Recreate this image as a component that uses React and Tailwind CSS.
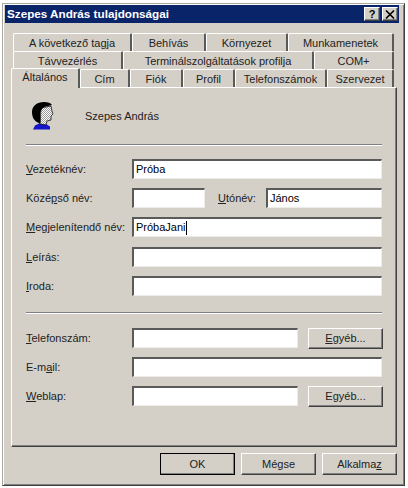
const Field = ({ w = 'w-[250px]', children }) => (
  <div className={`h-5 shrink-0 bg-white flex items-center pl-[2px] text-black border-t-2 border-l-2 border-t-[#5a5a58] border-l-[#5a5a58] border-b border-r border-b-[#eeece8] border-r-[#eeece8] ${w}`}>
    {children}
  </div>
);

const Btn = ({ children, className = '' }) => (
  <div className={`flex items-center justify-center bg-[#d4d0c8] border border-t-white border-l-white border-r-[#404040] border-b-[#404040] shadow-[inset_-1px_-1px_0_#808080] ${className}`}>
    {children}
  </div>
);

const Tab = ({ w, children }) => (
  <div className={`h-[18px] pt-px flex items-center justify-center rounded-t-[2px] border-t border-l border-t-white border-l-white border-r-2 border-r-[#5a5a58] bg-[#d4d0c8] ${w}`}>
    {children}
  </div>
);

const Row = ({ label, children }) => (
  <div className="flex items-center h-5">
    <div className="w-[106px] shrink-0 whitespace-nowrap">{label}</div>
    {children}
  </div>
);

const Separator = ({ className }) => (
  <div className={`w-[356px] h-[2px] border-t border-t-[#808080] border-b border-b-white ${className}`} />
);

const UserIcon = () => (
  <svg width="22" height="28" viewBox="0 0 22 28" className="ml-[6px] shrink-0">
    <defs>
      <pattern id="dither" width="2" height="2" patternUnits="userSpaceOnUse">
        <rect width="2" height="2" fill="#fff" />
        <rect width="1" height="1" fill="#9a9a9a" />
        <rect x="1" y="1" width="1" height="1" fill="#9a9a9a" />
      </pattern>
    </defs>
    <path d="M1 27.5 L3 23.5 L8 21 L14 22 L18 24.5 L18 27.5 Z" fill="#1414c8" />
    <path d="M9 6 L19 4 L20 9 L21 12 L19 14 L19 18 L15 19 L14 23 L8 22 Z" fill="url(#dither)" stroke="#000" strokeWidth="0.7" />
    <path d="M7 21 C2 19 0 15 0 10 C0 4 5 0 12 0 C16 0 19 1 20 3 L12 5 C9 7 8 10 8 13 C8 17 9 19 8 21 Z" fill="#000" />
  </svg>
);

export default function App() {
  return (
    <div className="w-[408px] h-[488px] bg-white overflow-hidden pt-[3px] pl-[2px] text-[11px] leading-none text-[#222] font-['Liberation_Sans',sans-serif]">
      <div className="w-[403px] h-[483px] bg-[#d4d0c8] border border-t-[#a8a6a0] border-l-[#a8a6a0] border-r-[#404040] border-b-[#404040] shadow-[inset_1px_1px_0_#fff,inset_-1px_-1px_0_#808080] pt-[1px] pl-[2px]">
        <div className="w-[394px] h-[18px] bg-[#0a246a] flex items-center justify-between pl-0.5 pr-px text-white font-bold text-[11.7px]">
          <span>Szepes András tulajdonságai</span>
          <div className="flex gap-0.5">
            <Btn className="w-4 h-[14px] text-black font-bold text-[11px]">?</Btn>
            <Btn className="w-4 h-[14px]">
              <svg width="10" height="9" viewBox="0 0 10 9">
                <path d="M1 0.5 L9 8.5 M9 0.5 L1 8.5" stroke="#000" strokeWidth="1.6" />
              </svg>
            </Btn>
          </div>
        </div>

        <div className="mt-[10px] ml-[8px] flex">
          <Tab w="w-[119px]">A következő tagja</Tab>
          <Tab w="w-[74px]">Behívás</Tab>
          <Tab w="w-[82px]">Környezet</Tab>
          <Tab w="w-[106px]">Munkamenetek</Tab>
        </div>
        <div className="ml-[8px] flex">
          <Tab w="w-[110px]">Távvezérlés</Tab>
          <Tab w="w-[191px]">Terminálszolgáltatások profilja</Tab>
          <Tab w="w-[80px]">COM+</Tab>
        </div>
        <div className="ml-[6px] h-[18px] flex items-end">
          <div className="relative z-10 h-[20px] -mb-[1px] w-[69px] pb-[2px] flex items-center justify-center rounded-t-[2px] border-t border-l border-t-white border-l-white border-r-2 border-r-[#5a5a58] bg-[#d4d0c8]">
            Általános
          </div>
          <Tab w="w-[50px]">Cím</Tab>
          <Tab w="w-[53px]">Fiók</Tab>
          <Tab w="w-[52px]">Profil</Tab>
          <Tab w="w-[92px]">Telefonszámok</Tab>
          <Tab w="w-[67px]">Szervezet</Tab>
        </div>

        <div className="ml-[6px] w-[386px] h-[360px] border border-t-white border-l-white border-r-[#404040] border-b-[#404040] shadow-[inset_-1px_-1px_0_#808080] pl-[14px] pt-[14px]">
          <div className="flex items-center h-7">
            <UserIcon />
            <span className="ml-[31px]">Szepes András</span>
          </div>
          <Separator className="mt-[14px]" />
          <div className="mt-[13px] flex flex-col gap-[9px]">
            <Row label={<><u>V</u>ezetéknév:</>}>
              <Field>Próba</Field>
            </Row>
            <Row label={<>Közé<u>p</u>ső név:</>}>
              <Field w="w-[73px]" />
              <span className="ml-[13px] w-[48px] shrink-0"><u>U</u>tónév:</span>
              <Field w="w-[116px]">János</Field>
            </Row>
            <Row label={<><u>M</u>egjelenítendő név:</>}>
              <Field>
                PróbaJani
                <span className="w-px h-[14px] bg-black" />
              </Field>
            </Row>
            <div className="mt-px">
              <Row label={<><u>L</u>eírás:</>}>
                <Field />
              </Row>
            </div>
            <Row label={<><u>I</u>roda:</>}>
              <Field />
            </Row>
          </div>
          <Separator className="mt-[16px]" />
          <div className="mt-[14px] flex flex-col gap-[9px]">
            <Row label={<><u>T</u>elefonszám:</>}>
              <Field w="w-[166px]" />
              <Btn className="ml-[10px] w-[75px] h-[21px]"><span><u>E</u>gyéb...</span></Btn>
            </Row>
            <Row label={<>E-m<u>a</u>il:</>}>
              <Field />
            </Row>
            <Row label={<><u>W</u>eblap:</>}>
              <Field w="w-[166px]" />
              <Btn className="ml-[10px] w-[75px] h-[21px]"><span>E<u>g</u>yéb...</span></Btn>
            </Row>
          </div>
        </div>

        <div className="mt-[6px] w-[392px] flex justify-end gap-[6px]">
          <Btn className="w-[75px] h-[22px] border-black!">OK</Btn>
          <Btn className="w-[75px] h-[22px]">Mégse</Btn>
          <Btn className="w-[75px] h-[22px]"><span>Alkalma<u>z</u></span></Btn>
        </div>
      </div>
    </div>
  );
}
